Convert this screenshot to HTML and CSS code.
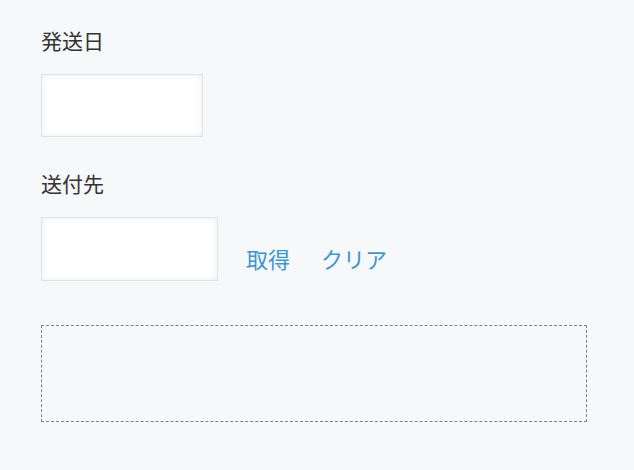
FILE: index.html
```html
<!DOCTYPE html>
<html lang="ja">
<head>
<meta charset="utf-8">
<link rel="stylesheet" href="styles.css">
</head>
<body>
<div class="form">
  <div class="field">
    <label class="label">発送日</label>
    <input class="box box-date" type="text">
  </div>
  <div class="field">
    <label class="label">送付先</label>
    <div class="row">
      <input class="box box-dest" type="text">
      <a class="link link-get" href="#">取得</a>
      <a class="link" href="#">クリア</a>
    </div>
  </div>
  <div class="drop"></div>
</div>
</body>
</html>
```
FILE: styles.css
```css
html, body {
  margin: 0;
  padding: 0;
  background: #f7f8fa;
}
body {
  font-family: "Noto Sans CJK JP", "Noto Sans", sans-serif;
  color: #333;
}
.form {
  padding: 24px 0 0 41px;
  width: 546px;
}
.field {
  display: flex;
  flex-direction: column;
  align-items: flex-start;
}
.label {
  font-size: 21px;
  line-height: 32px;
  margin-bottom: 18px;
}
.box {
  box-sizing: border-box;
  border: 1px solid #e0e3e4;
  background: #fff;
  box-shadow: inset 0 0 6px rgba(0, 0, 0, 0.08);
  padding: 0 8px;
  font: inherit;
  margin: 0;
  outline: none;
}
.box-date {
  width: 162px;
  height: 63px;
  margin-bottom: 30px;
}
.box-dest {
  width: 177px;
  height: 64px;
}
.row {
  display: flex;
  align-items: flex-end;
}
.link {
  color: #3a96d9;
  text-decoration: none;
  font-size: 22px;
  line-height: 30px;
  margin-bottom: 8px;
}
.link-get {
  margin-left: 28px;
  margin-right: 31px;
}
.drop {
  margin-top: 44px;
  width: 546px;
  height: 97px;
  box-sizing: border-box;
  border: 1px dashed #808080;
}
```
